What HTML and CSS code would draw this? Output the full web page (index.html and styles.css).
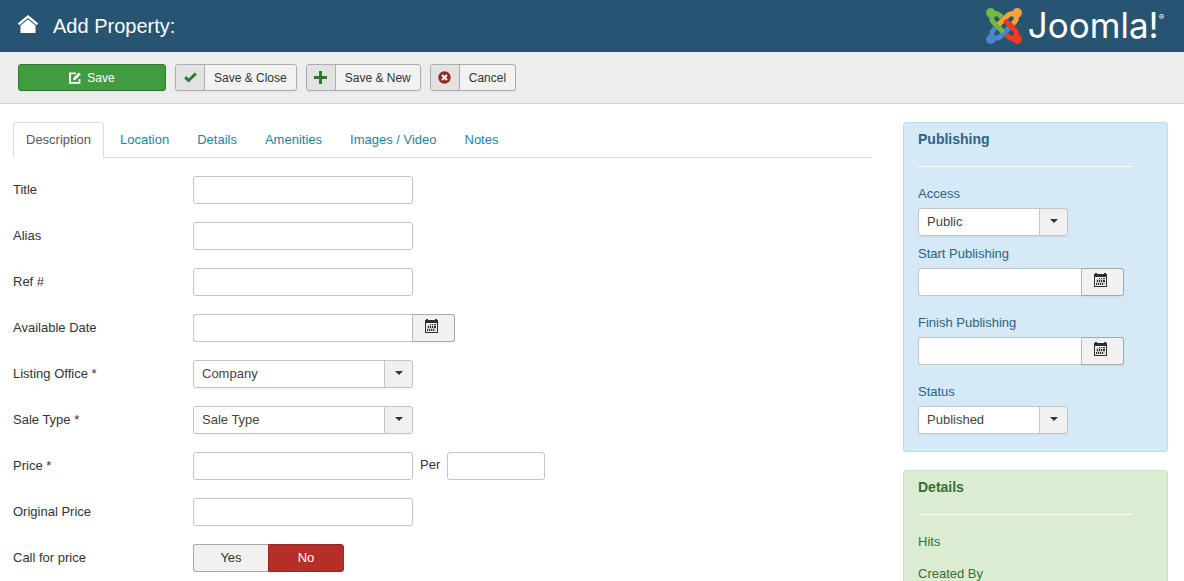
FILE: index.html
```html
<!DOCTYPE html>
<html lang="en">
<head>
<meta charset="utf-8">
<meta name="viewport" content="width=device-width, initial-scale=1">
<title>Add Property</title>
<link rel="stylesheet" href="styles.css">
</head>
<body>
<svg width="0" height="0" class="sprite" aria-hidden="true">
  <symbol id="calendar" viewBox="0 0 13 14">
    <path fill="#777" d="M2 6h9v6H2z" opacity=".35"/>
    <path fill="#2e2e2e" shape-rendering="crispEdges" d="M0 1h1V0h2v1h7V0h2v1h1v13H0zM1 4v9h11V4z"/>
    <path fill="#2e2e2e" shape-rendering="crispEdges" d="M5 5h1v1H5zM7 5h1v1H7zM9 5h2v1H9zM3 7h1v2H3zM5 7h1v2H5zM7 7h1v2H7zM9 7h2v2H9zM2 10h1v2H2zM4 10h1v2H4zM6 10h1v2H6zM8 10h1v2H8z"/>
  </symbol>
</svg>
<header class="header">
  <a class="home" href="#" aria-label="Home">
    <svg width="20" height="18" viewBox="0 0 20 18"><path fill="none" stroke="#fff" stroke-width="2.4" d="M.5 9.4 10 1.600l9.500 7.800"/><path fill="#fff" d="M2.500 10.500 10 4.400l7.500 6.100V18h-15z"/></svg>
  </a>
  <h1 class="title">Add Property:</h1>
  <div class="brand">
    <svg width="36" height="36" viewBox="0 0 36 36" aria-hidden="true">
      <defs><path id="arm" fill="none" stroke-width="5.200" d="M15.800 9.300 14 7.500C11 4.500 8 6 7 7S4.500 11 7.500 14.300L17.200 24"/></defs>
      <g fill="#4a86cc" stroke="#4a86cc"><use href="#arm" transform="rotate(270 18 18)"/><circle cx="4.800" cy="31.200" r="4.800" stroke="none"/></g>
      <g fill="#f9a03c" stroke="#f9a03c"><use href="#arm" transform="rotate(90 18 18)"/><circle cx="31.200" cy="4.800" r="4.800" stroke="none"/></g>
      <g fill="#73b83f" stroke="#73b83f"><use href="#arm"/><circle cx="4.800" cy="4.800" r="4.800" stroke="none"/></g>
      <g fill="#f23a1f" stroke="#f23a1f"><use href="#arm" transform="rotate(180 18 18)"/><circle cx="31.200" cy="31.200" r="4.800" stroke="none"/></g>
    </svg>
    <span class="wordmark">Joomla!<sup>®</sup></span>
  </div>
</header>

<div class="toolbar">
  <button class="btn btn-save" type="button"><svg width="12" height="12" viewBox="0 0 12 12"><path fill="none" stroke="#fff" stroke-width="1.800" d="M7 1.400H1v9.500h9.500V7"/><path fill="#fff" d="M4 8.500l.7-3L9.800.4l2 2L6.700 7.600z"/></svg><span>Save</span></button>
  <button class="btn" type="button"><span class="icon"><svg width="13" height="11" viewBox="0 0 13 11"><path fill="none" stroke="#2d7a2f" stroke-width="3" d="M1.200 5.200 4.600 8.500 11.800 1.500"/></svg></span><span class="text">Save &amp; Close</span></button>
  <button class="btn" type="button"><span class="icon"><svg width="13" height="13" viewBox="0 0 13 13"><path fill="#2d7a2f" d="M5 0h3v5h5v3H8v5H5V8H0V5h5z"/></svg></span><span class="text">Save &amp; New</span></button>
  <button class="btn" type="button"><span class="icon"><svg width="13" height="13" viewBox="0 0 13 13"><circle cx="6.500" cy="6.500" r="6.200" fill="#942a25"/><path stroke="#fff" stroke-width="2" d="M4 4l5 5M9 4L4 9"/></svg></span><span class="text">Cancel</span></button>
</div>

<main class="content">
  <form class="main">
    <nav class="tabs">
      <a class="tab active" href="#">Description</a>
      <a class="tab" href="#">Location</a>
      <a class="tab" href="#">Details</a>
      <a class="tab" href="#">Amenities</a>
      <a class="tab" href="#">Images / Video</a>
      <a class="tab" href="#">Notes</a>
    </nav>
    <div class="row"><label for="title">Title</label><input class="field" id="title" type="text"></div>
    <div class="row"><label for="alias">Alias</label><input class="field" id="alias" type="text"></div>
    <div class="row"><label for="ref">Ref #</label><input class="field" id="ref" type="text"></div>
    <div class="row"><label for="available">Available Date</label>
      <div class="date"><input class="field" id="available" type="text"><button type="button" aria-label="Pick a date"><svg width="13" height="14"><use href="#calendar"/></svg></button></div></div>
    <div class="row"><label for="office">Listing Office *</label><span class="select"><select id="office"><option>Company</option></select></span></div>
    <div class="row"><label for="sale">Sale Type *</label><span class="select"><select id="sale"><option>Sale Type</option></select></span></div>
    <div class="row"><label for="price">Price *</label><input class="field" id="price" type="text"><label class="per" for="per">Per</label><input class="field short" id="per" type="text"></div>
    <div class="row"><label for="original">Original Price</label><input class="field" id="original" type="text"></div>
    <div class="row"><span class="label" id="call">Call for price</span>
      <div class="switch" role="radiogroup" aria-labelledby="call">
        <label><input type="radio" name="call" value="1">Yes</label>
        <label class="no"><input type="radio" name="call" value="0" checked>No</label>
      </div></div>
  </form>

  <aside class="side">
    <section class="panel info">
      <h2>Publishing</h2>
      <hr>
      <div class="group tight"><label for="access">Access</label><span class="select"><select id="access"><option>Public</option></select></span></div>
      <div class="group"><label for="start">Start Publishing</label>
        <div class="date"><input class="field" id="start" type="text"><button type="button" aria-label="Pick a start date"><svg width="13" height="14"><use href="#calendar"/></svg></button></div></div>
      <div class="group"><label for="finish">Finish Publishing</label>
        <div class="date"><input class="field" id="finish" type="text"><button type="button" aria-label="Pick a finish date"><svg width="13" height="14"><use href="#calendar"/></svg></button></div></div>
      <div class="group"><label for="status">Status</label><span class="select"><select id="status"><option>Published</option></select></span></div>
    </section>
    <section class="panel success">
      <h2>Details</h2>
      <hr>
      <p>Hits</p>
      <p>Created By</p>
    </section>
  </aside>
</main>
</body>
</html>
```
FILE: styles.css
```css
* { box-sizing: border-box; }
body {
  margin: 0;
  height: 100vh;
  display: flex;
  flex-direction: column;
  background: #fff;
  color: #333;
  font: 13px/18px "Liberation Sans", Arial, sans-serif;
}
svg { display: block; }
.sprite { position: absolute; }
button, input, select { font: inherit; color: inherit; margin: 0; }

.header {
  flex: none;
  display: flex;
  align-items: center;
  height: 52px;
  padding: 0 20px 0 18px;
  background: #275470;
  color: #fff;
}
.home { margin-right: 15px; padding-bottom: 4px; }
.title { margin: 0; font-size: 20px; line-height: 52px; font-weight: 400; }
.brand { display: flex; align-items: center; gap: 6px; margin-left: auto; }
.wordmark { display: flex; padding-bottom: 2px; font: 400 35px/36px Inter, sans-serif; }
.wordmark sup { font-size: 8px; line-height: 20px; }

.toolbar {
  flex: none;
  display: flex;
  gap: 9px;
  padding: 12px 18px;
  background: #ededed;
  border-bottom: 1px solid #d3d3d3;
}
.btn {
  display: flex;
  height: 27px;
  padding: 0;
  border: 1px solid #adadad;
  border-radius: 3px;
  background: #f2f2f2;
  font-size: 12px;
  line-height: 27px;
  box-shadow: 0 1px 2px rgba(0, 0, 0, .05);
  overflow: hidden;
}
.btn .icon {
  display: flex;
  align-items: center;
  justify-content: center;
  width: 29px;
  height: 25px;
  background: #e2e2e2;
  border-right: 1px solid #adadad;
}
.btn .text { padding: 0 9px; height: 25px; }
.btn-save {
  width: 148px;
  align-items: center;
  justify-content: center;
  gap: 6px;
  border-color: #2d7a2f;
  background: #409c3f;
  color: #fff;
}
.btn-save span { height: 25px; }

.content {
  flex: 1;
  min-height: 0;
  display: grid;
  grid-template-columns: minmax(0, 1fr) 265px;
  gap: 32px;
  align-items: start;
  padding: 18px 16px 0 13px;
  overflow-y: auto;
  scrollbar-width: none;
}
.tabs { display: flex; height: 36px; margin-bottom: 18px; border-bottom: 1px solid #ddd; }
.tab {
  height: 36px;
  margin-right: 2px;
  padding: 8px 12px;
  border: 1px solid transparent;
  border-radius: 4px 4px 0 0;
  color: #2384a1;
  text-decoration: none;
}
.tab.active { margin-right: 3px; border-color: #ddd; border-bottom-color: #fff; background: #fff; color: #555; }

.row { display: flex; align-items: center; height: 28px; margin-bottom: 18px; }
.row > label:first-child, .label { width: 180px; }
.row .per { padding: 0 7px 2px; }
.field {
  width: 220px;
  height: 28px;
  padding: 4px 6px;
  border: 1px solid #c4c4c4;
  border-radius: 3px;
  background: #fff;
}
.field.short { width: 98px; }
.date { display: flex; }
.date .field { border-radius: 3px 0 0 3px; border-right: 0; }
.date button {
  display: flex;
  justify-content: center;
  width: 43px;
  height: 28px;
  padding: 4px 5px 0 0;
  border: 1px solid #a8a8a8;
  border-left-color: #b8b8b8;
  border-radius: 0 3px 3px 0;
  background: #f1f1f1;
  box-shadow: 0 1px 2px rgba(0, 0, 0, .05);
}
.row .date .field { width: 219px; }

.select { position: relative; display: block; width: 220px; height: 28px; }
.select select {
  appearance: none;
  width: 100%;
  height: 28px;
  padding: 0 36px 0 8px;
  border: 1px solid #c4c4c4;
  border-radius: 3px;
  background: linear-gradient(#c4c4c4, #c4c4c4) right 27px top / 1px 100% no-repeat,
    linear-gradient(#f1f1f1, #f1f1f1) right / 27px 100% no-repeat, #fff;
  box-shadow: 0 1px 2px rgba(0, 0, 0, .05);
  color: #444;
}
.select::after {
  content: "";
  position: absolute;
  right: 10px;
  top: 11px;
  border: 4px solid transparent;
  border-top-color: #333;
  border-bottom: 0;
  pointer-events: none;
}

.switch { display: flex; }
.switch label {
  position: relative;
  width: 75px;
  height: 28px;
  border: 1px solid #a8a8a8;
  border-right: 0;
  border-radius: 3px 0 0 3px;
  background: #f1f1f1;
  line-height: 26px;
  text-align: center;
}
.switch .no { width: 76px; border-right: 1px solid; border-color: #942a25; border-radius: 0 3px 3px 0; }
.switch .no:has(:checked) { background: #b52e28; color: #fff; border-color: #942a25; }
.switch input { position: absolute; inset: 0; opacity: 0; }

.panel { padding: 7px 35px 17px 14px; margin-bottom: 18px; border: 1px solid; border-radius: 3px; }
.info { background: #d5e9f6; border-color: #b3e0ea; color: #2c6485; }
.success { background: #dbecd2; border-color: #cde3bb; color: #34703a; }
.panel h2 { margin: 0; font-size: 14px; line-height: 18px; }
.panel hr { height: 1px; margin: 18px 0; border: 0; background: #fff; }
.panel p { margin: 0 0 14px; }
.group { display: grid; gap: 5px; margin-bottom: 18px; }
.group.tight { margin-bottom: 9px; }
.group:last-child { margin-bottom: 0; }
.group .select { width: 150px; }
.group .field { width: 163px; }
```
